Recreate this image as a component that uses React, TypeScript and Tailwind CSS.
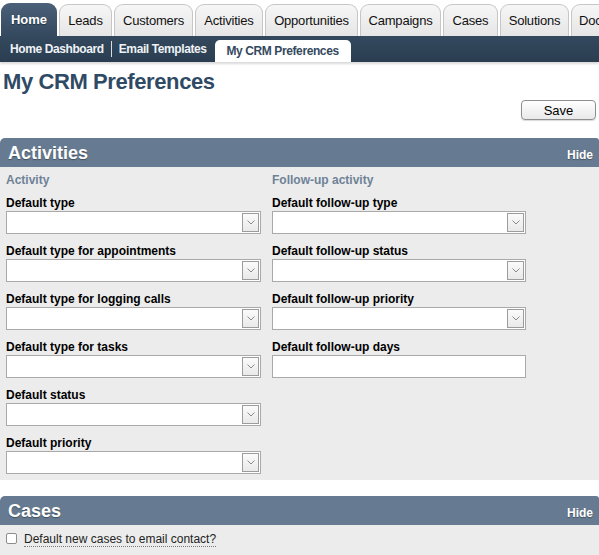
import React from 'react';

const tabs = [
  { label: 'Home', w: 'w-[56px]', active: true },
  { label: 'Leads', w: 'w-[53px]' },
  { label: 'Customers', w: 'w-[79px]' },
  { label: 'Activities', w: 'w-[68px]' },
  { label: 'Opportunities', w: 'w-[93px]' },
  { label: 'Campaigns', w: 'w-[81px]' },
  { label: 'Cases', w: 'w-[55px]' },
  { label: 'Solutions', w: 'w-[69px]' },
  { label: 'Documents', w: 'w-[80px]' },
];

function Chevron() {
  return (
    <svg width="8" height="5" viewBox="0 0 8 5">
      <polyline points="0.5,0.5 4,4 7.5,0.5" fill="none" stroke="#8a8a8a" strokeWidth="1" />
    </svg>
  );
}

function FakeSelect({ width, arrow = true }: { width: string; arrow?: boolean }) {
  return (
    <div className={`${width} h-[23px] bg-white border border-[#a9a9a9] flex items-center justify-end pr-[1px]`}>
      {arrow && (
        <div className="w-[17px] h-[19px] border border-[#9c9c9c] bg-gradient-to-b from-[#fbfbfb] to-[#e9e9e9] flex items-center justify-center">
          <Chevron />
        </div>
      )}
    </div>
  );
}

function Label({ text }: { text: string }) {
  return (
    <div className="h-[15px] flex items-end pb-[1px] leading-[13px] text-[12px] font-bold text-black">{text}</div>
  );
}

function Field({ label, width, arrow = true, last = false }: { label: string; width: string; arrow?: boolean; last?: boolean }) {
  return (
    <div className={last ? '' : 'mb-[10px]'}>
      <Label text={label} />
      <FakeSelect width={width} arrow={arrow} />
    </div>
  );
}

function PanelHeader({ title }: { title: string }) {
  return (
    <div className="h-[29px] bg-[#667b91] rounded-tl-[5px] rounded-tr-[3px] flex items-center justify-between pl-[8px] pr-[6px] pt-[2px]">
      <span className="text-[18px] font-bold text-white [text-shadow:0_1px_1px_rgba(0,0,0,0.35)]">{title}</span>
      <span className="text-[12px] font-bold text-white pt-[2px] [text-shadow:0_1px_1px_rgba(0,0,0,0.35)]">Hide</span>
    </div>
  );
}

export default function App() {
  return (
    <div className="w-[599px] h-[555px] overflow-hidden bg-white font-['Liberation_Sans',Arial,sans-serif]">
      {/* top tabs */}
      <div className="h-[36px] flex items-end gap-[2px] pl-[1px] overflow-hidden">
        {tabs.map((t) =>
          t.active ? (
            <div
              key={t.label}
              className={`${t.w} shrink-0 h-[33px] rounded-t-[9px] bg-gradient-to-b from-[#4b6179] to-[#34495e] flex items-center justify-center text-[13px] font-bold text-white [text-shadow:0_1px_1px_rgba(0,0,0,0.4)]`}
            >
              {t.label}
            </div>
          ) : (
            <div
              key={t.label}
              className={`${t.w} shrink-0 h-[32px] rounded-t-[9px] border border-b-0 border-[#c6c6c6] bg-gradient-to-b from-[#f6f6f6] to-[#e6e6e6] flex items-center justify-center text-[13px] tracking-[-0.2px] text-[#111] whitespace-nowrap overflow-hidden`}
            >
              {t.label}
            </div>
          )
        )}
      </div>

      {/* sub navigation */}
      <div className="h-[26px] bg-gradient-to-b from-[#34495e] to-[#2b3e51] flex items-end shadow-[0_2px_2px_rgba(0,0,0,0.15)] tracking-[-0.4px]">
        <div className="h-full flex items-center pl-[10px] text-[12px] font-bold text-[#eef2f6]">
          Home Dashboard
        </div>
        <div className="h-[16px] w-px bg-[#d8dee5] mx-[7px] self-center" />
        <div className="h-full flex items-center text-[12px] font-bold text-[#eef2f6]">Email Templates</div>
        <div className="ml-[8px] w-[136px] h-[22px] bg-white rounded-t-[5px] flex items-center justify-center text-[12px] font-bold text-[#34495e]">
          My CRM Preferences
        </div>
      </div>

      {/* title */}
      <div className="pl-[3px] pt-[7px] h-[36px] text-[22px] leading-[26px] font-bold tracking-[-0.4px] text-[#2f4a65]">
        My CRM Preferences
      </div>

      <div className="flex justify-end pr-[3px] pt-[2px]">
        <button className="w-[75px] h-[20px] rounded-[4px] border border-[#8f8f8f] bg-gradient-to-b from-white to-[#e9e9e9] text-[13px] text-black shadow-[0_1px_1px_rgba(0,0,0,0.15)]">
          Save
        </button>
      </div>

      {/* activities panel */}
      <div className="mt-[18px]">
        <PanelHeader title="Activities" />
        <div className="bg-[#ececec] pl-[6px] pt-[5px] pb-[6px] flex">
          <div className="w-[266px]">
            <div className="h-[16px] leading-[16px] text-[12px] font-bold text-[#6e8297] mb-[8px]">Activity</div>
            <Field label="Default type" width="w-[255px]" />
            <Field label="Default type for appointments" width="w-[255px]" />
            <Field label="Default type for logging calls" width="w-[255px]" />
            <Field label="Default type for tasks" width="w-[255px]" />
            <Field label="Default status" width="w-[255px]" />
            <Field label="Default priority" width="w-[255px]" last />
          </div>
          <div className="w-[254px]">
            <div className="h-[16px] leading-[16px] text-[12px] font-bold text-[#6e8297] mb-[8px]">Follow-up activity</div>
            <Field label="Default follow-up type" width="w-[254px]" />
            <Field label="Default follow-up status" width="w-[254px]" />
            <Field label="Default follow-up priority" width="w-[254px]" />
            <Field label="Default follow-up days" width="w-[254px]" arrow={false} />
          </div>
        </div>
      </div>

      {/* cases panel */}
      <div className="mt-[16px]">
        <PanelHeader title="Cases" />
        <div className="bg-[#ececec] h-[40px] pl-[6px] pt-[7px] flex items-start gap-[7px]">
          <div className="mt-[1px] w-[11px] h-[11px] rounded-[2px] border border-[#8d8d8d] bg-white" />
          <span className="text-[12px] leading-[14px] text-[#222] border-b border-dotted border-[#777]">
            Default new cases to email contact?
          </span>
        </div>
      </div>
    </div>
  );
}
